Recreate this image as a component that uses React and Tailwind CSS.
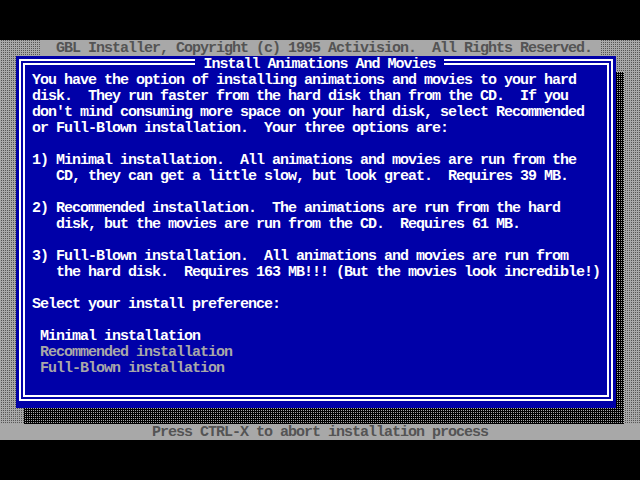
export default function App() {
  const body = [
    "You have the option of installing animations and movies to your hard",
    "disk.  They run faster from the hard disk than from the CD.  If you",
    "don't mind consuming more space on your hard disk, select Recommended",
    "or Full-Blown installation.  Your three options are:",
    "",
    "1) Minimal installation.  All animations and movies are run from the",
    "   CD, they can get a little slow, but look great.  Requires 39 MB.",
    "",
    "2) Recommended installation.  The animations are run from the hard",
    "   disk, but the movies are run from the CD.  Requires 61 MB.",
    "",
    "3) Full-Blown installation.  All animations and movies are run from",
    "   the hard disk.  Requires 163 MB!!! (But the movies look incredible!)",
    "",
    "Select your install preference:",
    "",
  ];
  return (
    <div className="w-[640px] h-[480px] bg-black flex flex-col font-['Liberation_Mono',monospace] text-[15px] tracking-[-1px] leading-4 font-bold">
      <div className="h-10 shrink-0" />
      <div className="h-[400px] shrink-0 flex flex-col bg-[image:conic-gradient(#545454_0_25%,#a8a8a8_0)] bg-[length:2px_2px]">
        <div className="h-4 mx-10 bg-[#a8a8a8] text-[#545454] pl-4 pt-px leading-[15px] whitespace-pre">
          GBL Installer, Copyright (c) 1995 Activision.  All Rights Reserved.
        </div>
        <div className="flex pl-4">
          <div className="w-[600px] h-[352px] bg-[#0000a8] px-[3px] pb-[7px]">
            <fieldset className="h-full border-[6px] border-double border-white pl-[7px]">
              <legend className="mx-auto px-2 h-3 text-white whitespace-pre">
                <span className="block leading-4 pt-px">Install Animations And Movies</span>
              </legend>
              <div className="pt-[5px] text-white whitespace-pre">
                {body.map((l, i) => (
                  <div key={i} className="h-4">{l}</div>
                ))}
                <div className="pl-2">
                  <div className="h-4 text-white">Minimal installation</div>
                  <div className="h-4 text-[#a8a8a8]">Recommended installation</div>
                  <div className="h-4 text-[#a8a8a8]">Full-Blown installation</div>
                </div>
              </div>
            </fieldset>
          </div>
          <div className="w-2 mt-4 h-[336px] bg-[image:conic-gradient(#a8a8a8_0_25%,#000_0)] bg-[length:2px_2px]" />
        </div>
        <div className="ml-6 w-[600px] h-4 bg-[image:conic-gradient(#a8a8a8_0_25%,#000_0)] bg-[length:2px_2px]" />
        <div className="h-4 bg-[#a8a8a8] text-[#545454] text-center pt-px leading-[15px] whitespace-pre">
          Press CTRL-X to abort installation process
        </div>
      </div>
      <div className="h-10 shrink-0" />
    </div>
  );
}
